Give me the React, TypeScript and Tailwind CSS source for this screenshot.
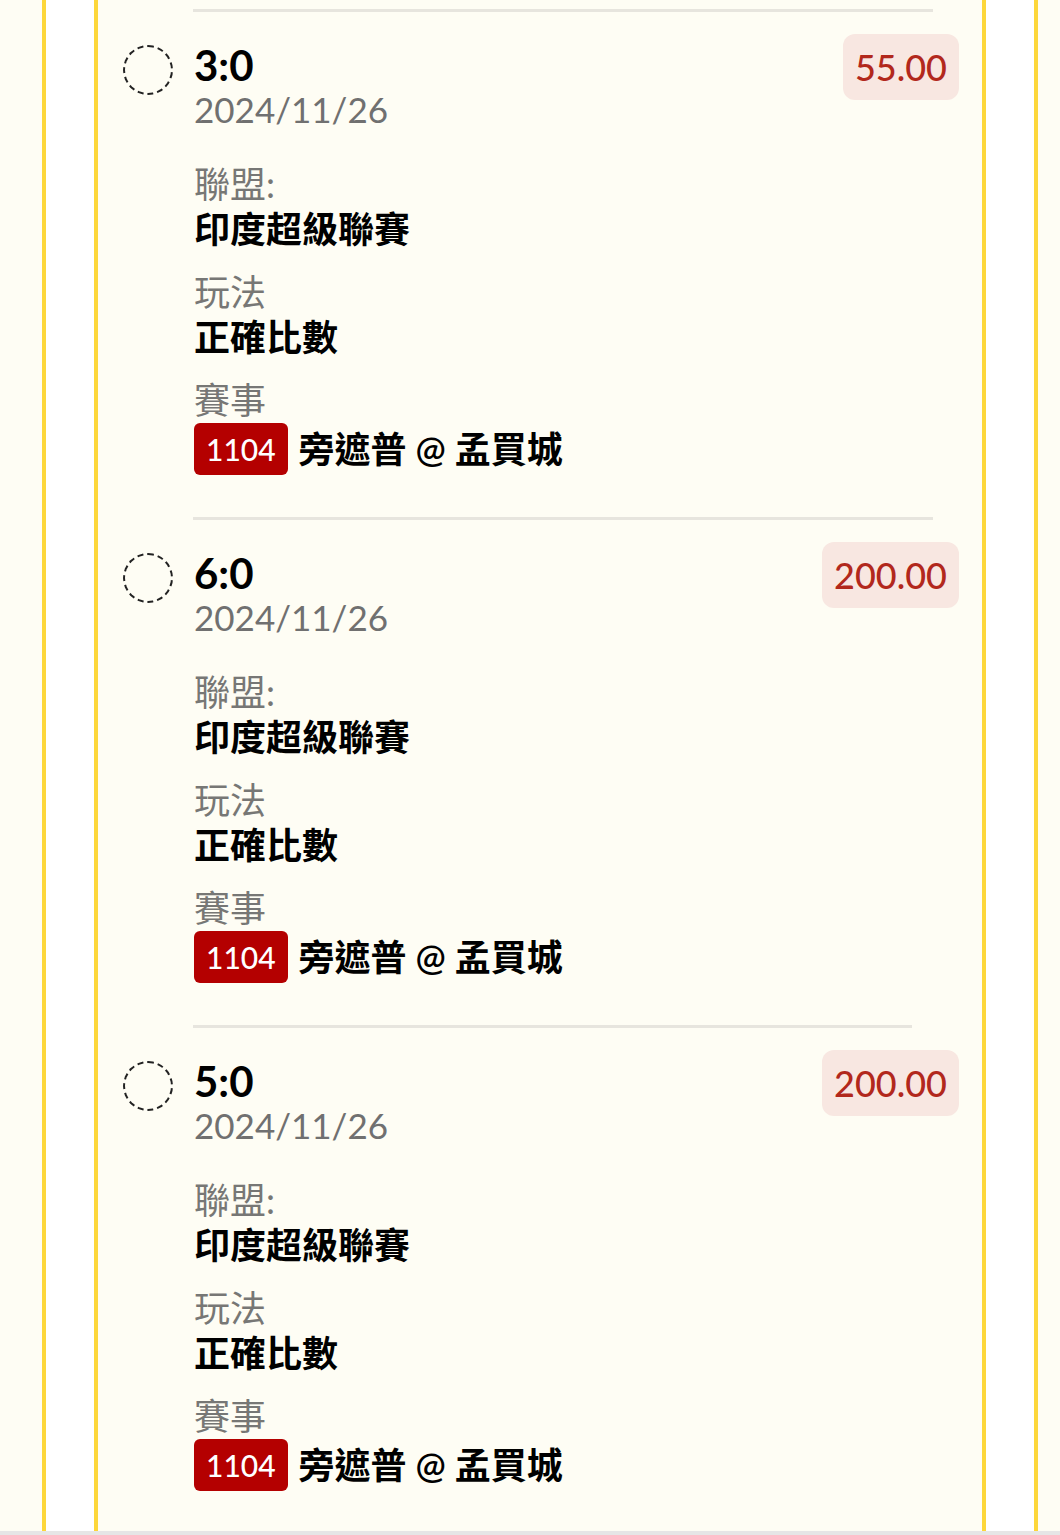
import React from 'react'

type Bet = { score: string; date: string; amount: string; league: string; play: string; code: string; match: string; lineW: string }

const BETS: Bet[] = [
  { score: '3:0', date: '2024/11/26', amount: '55.00', league: '印度超級聯賽', play: '正確比數', code: '1104', match: '旁遮普 @ 孟買城', lineW: 'w-[740px]' },
  { score: '6:0', date: '2024/11/26', amount: '200.00', league: '印度超級聯賽', play: '正確比數', code: '1104', match: '旁遮普 @ 孟買城', lineW: 'w-[740px]' },
  { score: '5:0', date: '2024/11/26', amount: '200.00', league: '印度超級聯賽', play: '正確比數', code: '1104', match: '旁遮普 @ 孟買城', lineW: 'w-[719px]' },
]

function Field({ label, value }: { label: string; value: string }) {
  return (
    <div className="text-[36px] leading-[45px]">
      <div className="text-[#777775]">{label}</div>
      <div className="font-semibold text-black">{value}</div>
    </div>
  )
}

function BetItem({ bet }: { bet: Bet }) {
  return (
    <div>
      {/* divider */}
      <div className={`ml-[95px] h-[3px] bg-[#e7e5de] ${bet.lineW}`} />
      <div className="flex items-start pl-[25px] pr-[23px] pt-[31px] pb-[42px]">
        <div className="mt-[2px] h-[50px] w-[50px] shrink-0 rounded-full border-2 border-dashed border-[#222]" />
        <div className="ml-[21px] flex-1">
          <div className="text-[42px] font-bold leading-[45px] text-black">{bet.score}</div>
          <div className="text-[35px] leading-[42px] text-[#707070]">{bet.date}</div>
          <div className="mt-[32px] flex flex-col gap-[18px]">
            <Field label="聯盟:" value={bet.league} />
            <Field label="玩法" value={bet.play} />
            <div>
              <div className="text-[36px] leading-[45px] text-[#777775]">賽事</div>
              <div className="flex items-center gap-[11px]">
                <span className="flex h-[52px] items-center rounded-[6px] bg-[#b40000] px-[12px] text-[30px] font-medium text-white">
                  {bet.code}
                </span>
                <span className="text-[36px] font-semibold leading-[52px] text-black">{bet.match}</span>
              </div>
            </div>
          </div>
        </div>
        <div className="-mt-[9px] flex h-[66px] items-center rounded-[12px] bg-[#f8e7e1] px-[12px] text-[36px] font-medium text-[#b2281c]">
          {bet.amount}
        </div>
      </div>
    </div>
  )
}

function Rail() {
  return <div className="w-[56px] shrink-0 border-x-4 border-[#fdd73a] bg-white" />
}

export default function App() {
  return (
    <div className="flex h-[1535px] w-[1060px] flex-col overflow-hidden bg-[#fefdf4] font-['Lato','Noto_Sans_CJK_TC',sans-serif]">
      <div className="flex min-h-0 flex-1">
        <div className="w-[42px] shrink-0" />
        <Rail />
        <div className="w-[884px] shrink-0 pt-[9px]">
          {BETS.map((b, i) => (
            <BetItem key={i} bet={b} />
          ))}
        </div>
        <Rail />
        <div className="flex-1" />
      </div>
      <div className="h-[4px] shrink-0 bg-[#e6e6e6]" />
    </div>
  )
}
